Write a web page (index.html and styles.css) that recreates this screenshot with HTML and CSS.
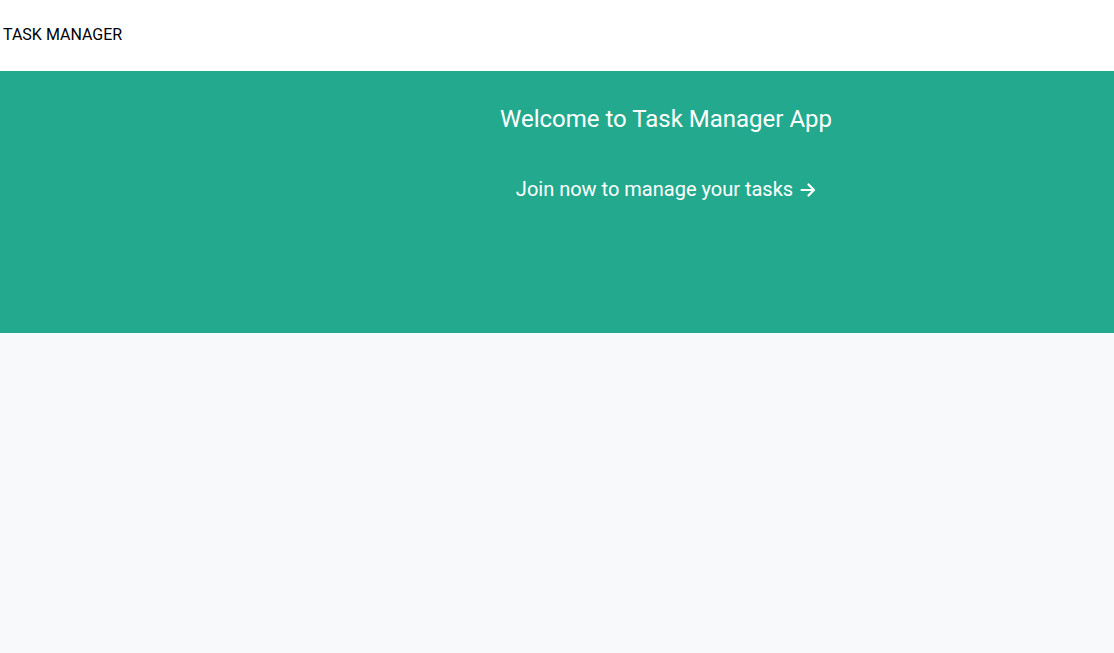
FILE: index.html
```html
<!DOCTYPE html>
<html lang="en">
<head>
<meta charset="utf-8">
<title>Task Manager</title>
<link rel="stylesheet" href="styles.css">
</head>
<body>
<header class="topbar">
  <span class="brand">TASK MANAGER</span>
</header>
<section class="hero">
  <div class="hero-side"></div>
  <div class="hero-main">
    <h1 class="hero-title">Welcome to Task Manager App</h1>
    <a class="hero-link" href="#">Join now to manage your tasks <span class="arrow">
      <svg width="16" height="14" viewBox="0 0 16 14" fill="none" stroke="#fff" stroke-width="2.2" stroke-linecap="round" stroke-linejoin="round"><path d="M1.5 7h12.5M8.5 1.5L14 7l-5.5 5.5"/></svg>
    </span></a>
  </div>
</section>
<main class="content"></main>
</body>
</html>
```
FILE: styles.css
```css
* { box-sizing: border-box; }
html, body { margin: 0; padding: 0; }
body {
  font-family: Roboto, "Liberation Sans", sans-serif;
  background: #f8f9fb;
  min-height: 653px;
}
.topbar {
  height: 71px;
  background: #fff;
  display: flex;
  align-items: center;
  padding-left: 3px;
  padding-bottom: 2px;
}
.brand {
  font-size: 16px;
  color: #000;
}
.hero {
  height: 262px;
  background: #23a98d;
  display: grid;
  grid-template-columns: 218px 1fr;
}
.hero-main {
  display: flex;
  flex-direction: column;
  align-items: center;
  padding-top: 33px;
}
.hero-title {
  margin: 0;
  font-size: 24px;
  font-weight: 400;
  color: #fff;
  line-height: 30px;
}
.hero-link {
  margin-top: 41px;
  font-size: 20px;
  color: #fff;
  text-decoration: none;
  line-height: 28px;
  display: flex;
  align-items: center;
  gap: 7px;
}
.arrow { display: inline-flex; align-items: center; padding-top: 1px; }
.content { height: 320px; }
```
